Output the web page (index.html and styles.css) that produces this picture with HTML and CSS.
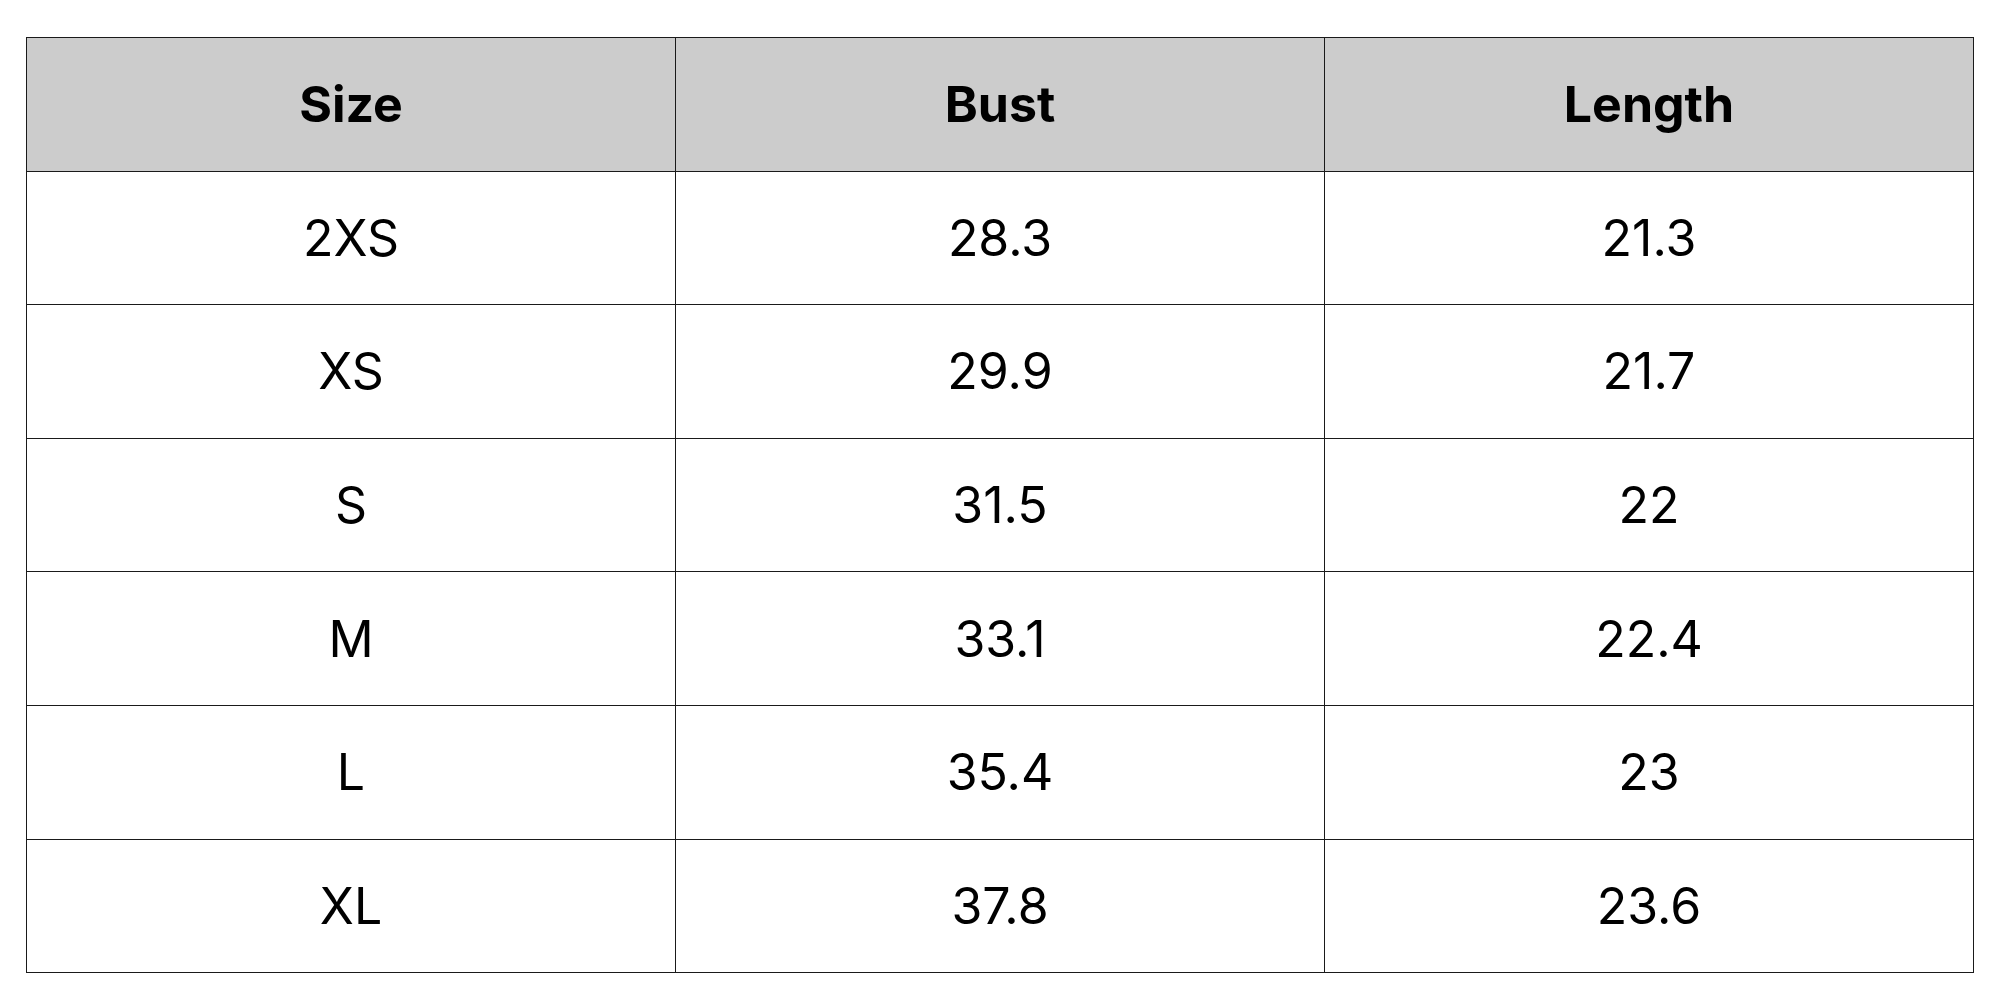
FILE: index.html
```html
<!DOCTYPE html>
<html>
<head>
<meta charset="utf-8">
<link rel="stylesheet" href="styles.css">
</head>
<body>
<div class="page">
<table class="size-table">
<thead>
<tr><th>Size</th><th>Bust</th><th>Length</th></tr>
</thead>
<tbody>
<tr><td>2XS</td><td>28.3</td><td>21.3</td></tr>
<tr><td>XS</td><td>29.9</td><td>21.7</td></tr>
<tr><td>S</td><td>31.5</td><td>22</td></tr>
<tr><td>M</td><td>33.1</td><td>22.4</td></tr>
<tr><td>L</td><td>35.4</td><td>23</td></tr>
<tr><td>XL</td><td>37.8</td><td>23.6</td></tr>
</tbody>
</table>
</div>
</body>
</html>
```
FILE: styles.css
```css
html, body {
  margin: 0;
  padding: 0;
  background: #ffffff;
}
.page {
  padding: 37px 26px 0 26px;
}
.size-table {
  width: 1948px;
  border-collapse: collapse;
  table-layout: fixed;
  font-family: "Inter", "Lato", sans-serif;
  color: #000;
}
.size-table th,
.size-table td {
  border: 1px solid #1a1a1a;
  height: 133.6px;
  padding: 0;
  text-align: center;
  vertical-align: middle;
  font-size: 50px;
  box-sizing: border-box;
}
.size-table th {
  background: #cccccc;
  font-weight: 700;
}
.size-table td {
  font-weight: 400;
}
```
